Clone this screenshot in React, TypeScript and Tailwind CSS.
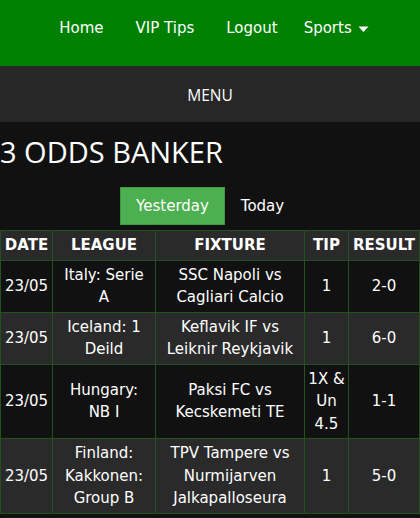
import React from "react";

type Row = {
  date: string;
  league: string[];
  fixture: string[];
  tip: string[];
  result: string;
};

const rows: Row[] = [
  { date: "23/05", league: ["Italy: Serie", "A"], fixture: ["SSC Napoli vs", "Cagliari Calcio"], tip: ["1"], result: "2-0" },
  { date: "23/05", league: ["Iceland: 1", "Deild"], fixture: ["Keflavik IF vs", "Leiknir Reykjavik"], tip: ["1"], result: "6-0" },
  { date: "23/05", league: ["Hungary:", "NB I"], fixture: ["Paksi FC vs", "Kecskemeti TE"], tip: ["1X &", "Un", "4.5"], result: "1-1" },
  { date: "23/05", league: ["Finland:", "Kakkonen:", "Group B"], fixture: ["TPV Tampere vs", "Nurmijarven", "Jalkapalloseura"], tip: ["1"], result: "5-0" },
];

const verdana = { fontFamily: '"DejaVu Sans", Verdana, sans-serif' };
const segoe = { fontFamily: '"Open Sans", "Noto Sans", sans-serif' };

function Lines({ items }: { items: string[] }) {
  return (
    <>
      {items.map((t, i) => (
        <div key={i}>{t}</div>
      ))}
    </>
  );
}

export default function App() {
  const cell = "border border-[#25501f] px-[2px] py-[3px] text-center align-middle";
  return (
    <div className="min-h-[518px] bg-[#111111] text-white" style={verdana}>
      <nav className="flex h-[66px] items-start justify-center bg-[#008000] pt-[17px] pl-[2px] text-[15px] leading-[22px]">
        <a className="px-[16px]">Home</a>
        <a className="px-[16px]">VIP Tips</a>
        <a className="px-[16px]">Logout</a>
        <a className="flex items-center gap-[6px] px-[10px]">
          Sports
          <svg width="11" height="8" viewBox="0 0 11 8" className="mt-[1px]">
            <path d="M0.5 1.5 L10.5 1.5 L5.5 7 Z" fill="white" />
          </svg>
        </a>
      </nav>
      <div className="flex h-[56px] items-center justify-center bg-[#272727] pt-[3px] text-[15.5px]" style={segoe}>
        MENU
      </div>
      <h2 className="mt-[10px] text-[29px] leading-[40px]" style={segoe}>
        3 ODDS BANKER
      </h2>
      <div className="mt-[15px] flex justify-center text-[15px]">
        <button className="h-[38px] w-[105px] border border-[#3e9a42] bg-[#4caf50] pt-[1px] text-white">Yesterday</button>
        <button className="h-[38px] w-[75px] pt-[1px] text-white">Today</button>
      </div>
      <table className="mt-[5px] w-[419px] table-fixed border-collapse text-[15px] leading-[22.5px]">
        <colgroup>
          <col className="w-[52px]" />
          <col className="w-[103px]" />
          <col className="w-[149px]" />
          <col className="w-[44px]" />
          <col className="w-[71px]" />
        </colgroup>
        <thead>
          <tr className="bg-[#2a2a2a] font-bold">
            <th className={cell}>DATE</th>
            <th className={cell}>LEAGUE</th>
            <th className={cell}>FIXTURE</th>
            <th className={cell}>TIP</th>
            <th className={cell}>RESULT</th>
          </tr>
        </thead>
        <tbody>
          {rows.map((r, i) => (
            <tr key={i} className={i % 2 === 0 ? "bg-[#111111]" : "bg-[#2a2a2a]"}>
              <td className={cell}>{r.date}</td>
              <td className={cell}>
                <Lines items={r.league} />
              </td>
              <td className={cell}>
                <Lines items={r.fixture} />
              </td>
              <td className={cell}>
                <Lines items={r.tip} />
              </td>
              <td className={cell}>{r.result}</td>
            </tr>
          ))}
        </tbody>
      </table>
    </div>
  );
}
